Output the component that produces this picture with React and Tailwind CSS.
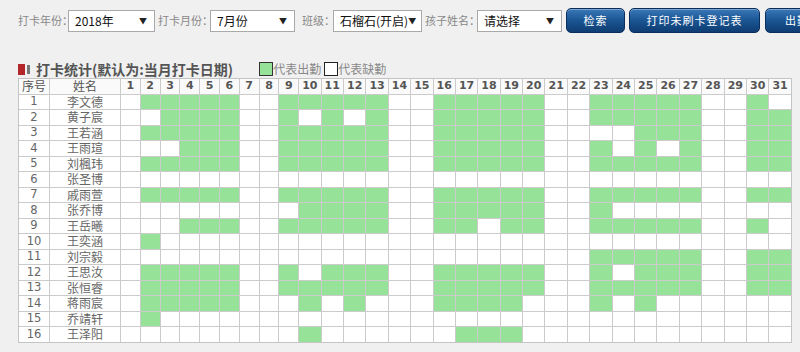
import React from 'react';

const cjk = '"Noto Sans CJK SC", "Noto Sans", sans-serif';

const students = [
  ['李文德', '2-6,9-13,16-20,23-27,30'],
  ['黄子宸', '3-6,9,11,13,16-20,23-27,30-31'],
  ['王若涵', '2-6,9-13,16-20,25-27,30-31'],
  ['王雨瑄', '4-6,9-13,16-20,23,25,27,30-31'],
  ['刘楓玮', '2-6,9-13,16-20,23-27,30-31'],
  ['张圣博', ''],
  ['戚雨萱', '2-6,9-13,16-20,23-27,30-31'],
  ['张乔博', '10-13,16-20,23'],
  ['王岳曦', '4-6,9-13,16-17,19-20,23-27,30'],
  ['王奕涵', '2'],
  ['刘宗毅', '23-27,30-31'],
  ['王思汝', '2-6,9,11-13,16-20,23,25-27,30-31'],
  ['张恒睿', '2-6,9-13,16-20,23-27,30-31'],
  ['蒋雨宸', '2-6,10,12,16-19,23,25'],
  ['乔靖轩', '2'],
  ['王泽阳', '10,17-19'],
];

// "2-6,9" -> Set {2,3,4,5,6,9}
function parseDays(str) {
  const set = new Set();
  if (!str) return set;
  str.split(',').forEach((part) => {
    const [a, b] = part.split('-').map(Number);
    for (let d = a; d <= (b || a); d++) set.add(d);
  });
  return set;
}

const days = Array.from({ length: 31 }, (_, i) => i + 1);

function Label({ children, width, className = '' }) {
  return (
    <span className={`shrink-0 text-[11px] text-[#888] whitespace-nowrap ${width} ${className}`}>{children}</span>
  );
}

function FakeSelect({ value, width }) {
  return (
    <div
      className={`relative shrink-0 flex items-center justify-between h-[22px] bg-white border border-[#a9a9a9] pl-[6px] pr-[7px] text-[12px] text-[#111] ${width}`}
    >
      <span>{value}</span>
      <span className="text-[8px] text-[#222]">▼</span>
    </div>
  );
}

function BlueButton({ children, width, className = '' }) {
  return (
    <button
      className={`h-[25px] shrink-0 rounded-[5px] border border-[#0b2f5c] bg-gradient-to-b from-[#3a78b8] via-[#1a5593] to-[#0f3d73] text-white text-[11px] tracking-[1px] whitespace-nowrap shadow-[inset_0_1px_0_rgba(255,255,255,0.35)] ${width} ${className}`}
    >
      {children}
    </button>
  );
}

function App() {
  return (
    <div className="w-[800px] h-[352px] overflow-hidden bg-[#f0f0f0]" style={{ fontFamily: cjk }}>
      {/* Filter bar */}
      <div className="flex items-center pt-[8px] pl-[18px] whitespace-nowrap">
        <Label width="w-[50px]">打卡年份：</Label>
        <FakeSelect value="2018年" width="w-[87px]" />
        <Label width="w-[55px]" className="pl-[3px]">打卡月份：</Label>
        <FakeSelect value="7月份" width="w-[85px]" />
        <Label width="w-[38px]" className="pl-[7px]">班级：</Label>
        <FakeSelect value="石榴石(开启)" width="w-[89px]" />
        <Label width="w-[55px]" className="pl-[3px]">孩子姓名：</Label>
        <FakeSelect value="请选择" width="w-[85px]" />
        <BlueButton width="w-[59px]" className="ml-[4px]">检索</BlueButton>
        <BlueButton width="w-[131px]" className="ml-[4px]">打印未刷卡登记表</BlueButton>
        <BlueButton width="w-[90px]" className="ml-[5px] text-left pl-[19px]">出勤统计导出</BlueButton>
      </div>

      {/* Title + legend */}
      <div className="flex items-center mt-[28px] pl-[18px] h-[16px]">
        <div className="flex items-center">
          <span className="w-[7px] h-[11px] bg-[#b3262a]" />
          <span className="w-[3px] h-[9px] ml-[2px] bg-[#777]" />
          <span className="ml-[6px] text-[14px] font-bold text-[#555] leading-[14px]">打卡统计(默认为:当月打卡日期)</span>
        </div>
        <div className="flex items-center ml-[26px]">
          <span className="w-[14px] h-[14px] bg-[#96e298] border border-[#333]" />
          <span className="text-[12px] text-[#888] leading-[14px]">代表出勤</span>
          <span className="ml-[3px] w-[14px] h-[14px] bg-white border border-[#222]" />
          <span className="text-[12px] text-[#888] leading-[14px]">代表缺勤</span>
        </div>
      </div>

      {/* Attendance grid */}
      <div className="ml-[18px] mt-[1px] w-[774px] grid grid-cols-[30px_70px_repeat(9,18.8px)_repeat(22,21.4px)] auto-rows-[14.5px] gap-px bg-[#cbcbcb] border border-[#c4c4c4]">
        <div className="bg-[#fafafa] flex items-center justify-center text-[12px] text-[#555]">序号</div>
        <div className="bg-[#fafafa] flex items-center justify-center text-[12px] text-[#555]">姓名</div>
        {days.map((d) => (
          <div
            key={d}
            className="bg-[#fafafa] flex items-center justify-center text-[11px] font-bold text-[#555]"
            style={{ fontFamily: '"DejaVu Sans", sans-serif' }}
          >
            {d}
          </div>
        ))}

        {students.map(([name, present], i) => {
          const set = parseDays(present);
          return (
            <React.Fragment key={name}>
              <div
                className="bg-white flex items-center justify-center text-[11.5px] text-[#666]"
                style={{ fontFamily: '"DejaVu Sans", sans-serif' }}
              >
                {i + 1}
              </div>
              <div className="bg-white flex items-center justify-center text-[12px] text-[#666]">{name}</div>
              {days.map((d) => (
                <div key={d} className={set.has(d) ? 'bg-[#96e298]' : 'bg-white'} />
              ))}
            </React.Fragment>
          );
        })}
      </div>
    </div>
  );
}

export default App;
